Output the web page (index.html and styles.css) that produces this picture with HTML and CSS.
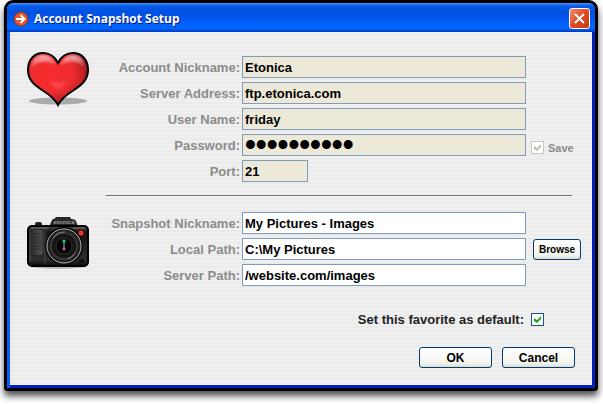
FILE: index.html
```html
<!DOCTYPE html>
<html lang="en">
<head>
<meta charset="UTF-8">
<meta name="viewport" content="width=device-width, initial-scale=1.0">
<title>Account Snapshot Setup</title>
<link rel="stylesheet" href="styles.css">
</head>
<body>

<div class="window">
    <header class="titlebar">
        <svg class="app-icon" width="16" height="16" viewBox="0 0 16 16" aria-hidden="true">
            <circle cx="8" cy="8" r="7" fill="#e4572c" stroke="#8c3524"/>
            <path d="M3 8h8M7.500 4l4 4-4 4" fill="none" stroke="#fff" stroke-width="2"/>
        </svg>
        <h1>Account Snapshot Setup</h1>
        <button type="button" class="close" aria-label="Close">
            <svg width="13" height="13" viewBox="0 0 13 13"><path d="M2 2l9 9M11 2l-9 9" stroke="#fff" stroke-width="2"/></svg>
        </button>
    </header>

    <form class="content">
        <section class="group">
            <svg class="picture" width="64" height="56" viewBox="0 0 64 56" aria-hidden="true">
                <defs>
                    <radialGradient id="heart" cx="0.4" cy="0.4" r="0.65">
                        <stop offset="0" stop-color="#f92a2d"/>
                        <stop offset="0.55" stop-color="#ee2c2f"/>
                        <stop offset="0.8" stop-color="#bf2125"/>
                        <stop offset="1" stop-color="#7c0e12"/>
                    </radialGradient>
                    <linearGradient id="shine" x1="0" y1="0" x2="0" y2="1">
                        <stop offset="0" stop-color="#fff" stop-opacity="0.65"/>
                        <stop offset="1" stop-color="#fff" stop-opacity="0"/>
                    </linearGradient>
                    <filter id="soft">
                        <feGaussianBlur stdDeviation="1"/>
                    </filter>
                </defs>
                <ellipse cx="31" cy="49" rx="29" ry="3.500" fill="#aaa"/>
                <path d="M31 53C28 47 23 43 15 38C6 32 1 27 1 18C1 8 7 1 16 1C23 1 28 5 31 11C34 5 39 1 46 1C55 1 61 8 61 18C61 27 56 32 47 38C39 43 34 47 31 53Z" fill="url(#heart)" stroke="#000" stroke-width="2"/>
                <g filter="url(#soft)">
                    <path d="M4 17C4 8 9 3 16 3C22 3 27 7 29 13C20 8 10 9 4 17Z" fill="url(#shine)"/>
                    <path d="M33 13C35 7 40 3 46 3C53 3 58 8 58 17C53 9 43 8 33 13Z" fill="url(#shine)"/>
                    <path d="M21 30h20l-10 8z" fill="#ff6666" opacity="0.4"/>
                </g>
            </svg>
            <div class="rows">
                <div class="row">
                    <label for="account">Account Nickname:</label>
                    <input type="text" id="account" class="field locked" value="Etonica" readonly>
                </div>
                <div class="row">
                    <label for="server">Server Address:</label>
                    <input type="text" id="server" class="field locked" value="ftp.etonica.com" readonly>
                </div>
                <div class="row">
                    <label for="user">User Name:</label>
                    <input type="text" id="user" class="field locked" value="friday" readonly>
                </div>
                <div class="row">
                    <label for="password">Password:</label>
                    <input type="password" id="password" class="field locked password" value="abcdefghij" readonly>
                    <div class="save">
                        <input type="checkbox" id="save" class="check" checked disabled>
                        <label for="save">Save</label>
                    </div>
                </div>
                <div class="row">
                    <label for="port">Port:</label>
                    <input type="text" id="port" class="field locked port" value="21" readonly>
                </div>
            </div>
        </section>

        <hr class="divider">

        <section class="group">
            <svg class="picture camera" width="64" height="56" viewBox="0 0 64 56" aria-hidden="true">
                <defs>
                    <linearGradient id="body" x1="0" y1="0" x2="0" y2="1">
                        <stop offset="0" stop-color="#4a4a4a"/>
                        <stop offset="0.15" stop-color="#161616"/>
                        <stop offset="0.85" stop-color="#2c2c2c"/>
                        <stop offset="1" stop-color="#0a0a0a"/>
                    </linearGradient>
                    <linearGradient id="grip">
                        <stop offset="0" stop-color="#2a2a2a"/>
                        <stop offset="0.8" stop-color="#505050"/>
                        <stop offset="1" stop-color="#2a2a2a"/>
                    </linearGradient>
                    <radialGradient id="lens">
                        <stop offset="0" stop-color="#111"/>
                        <stop offset="0.7" stop-color="#333"/>
                        <stop offset="1" stop-color="#161616"/>
                    </radialGradient>
                </defs>
                <ellipse cx="31" cy="50" rx="29" ry="3" fill="#bbb"/>
                <path d="M8 11V8q0-2 2-2h3q2 0 2 2v3z" fill="#222"/>
                <path d="M22 11l3-7q0-1 2-1l2-2h14l1 2q4 0 5 2l2 6z" fill="#262626"/>
                <rect x="1" y="10" width="60" height="40" rx="4" fill="url(#body)" stroke="#000" stroke-width="2"/>
                <path d="M4 12h17M46 12h12" stroke="#777"/>
                <path d="M3 14v32" stroke="#555"/>
                <rect x="4" y="14" width="13" height="25" rx="4" fill="url(#grip)"/>
                <path d="M6 18h9M6 21h9M6 24h9M6 27h9M6 30h9M6 33h9" stroke="#222" opacity="0.6"/>
                <path d="M18 13v35" stroke="#444"/>
                <text x="37" y="8" class="brand">etonica</text>
                <circle cx="37" cy="30" r="19" fill="#090909"/>
                <circle cx="37" cy="30" r="17" fill="url(#lens)" stroke="#bbb"/>
                <circle cx="37" cy="30" r="13" fill="#161616" stroke="#484848"/>
                <circle cx="37" cy="30" r="8" fill="#060606" stroke="#303030"/>
                <path d="M26 22a14 14 0 0 1 12-6M48 37a13 13 0 0 1-7 6" fill="none" stroke="#888"/>
                <path d="M37 24v8" stroke="#8bb"/>
                <circle cx="37" cy="25" r="1.500" fill="#25d890"/>
                <circle cx="37" cy="33" r="1.500" fill="#b565b8"/>
                <circle cx="54" cy="17" r="2.500" fill="#f3321f"/>
                <rect x="52" y="43" width="5" height="4" fill="#111"/>
            </svg>
            <div class="rows">
                <div class="row">
                    <label for="snapshot">Snapshot Nickname:</label>
                    <input type="text" id="snapshot" class="field" value="My Pictures - Images">
                </div>
                <div class="row">
                    <label for="local">Local Path:</label>
                    <input type="text" id="local" class="field" value="C:\My Pictures">
                    <button type="button" class="button browse">Browse</button>
                </div>
                <div class="row">
                    <label for="path">Server Path:</label>
                    <input type="text" id="path" class="field" value="/website.com/images">
                </div>
            </div>
        </section>

        <div class="default">
            <label for="default">Set this favorite as default:</label>
            <input type="checkbox" id="default" class="check" checked>
        </div>

        <div class="actions">
            <button type="submit" class="button">OK</button>
            <button type="button" class="button">Cancel</button>
        </div>
    </form>
</div>

</body>
</html>
```

FILE: styles.css
```css
* {
    box-sizing: border-box;
}

body {
    margin: 0;
    padding: 0 5px 13px 4px;
    background-color: #fff;
    font-family: "Liberation Sans", Arial, sans-serif;
    font-size: 13px;
    font-weight: bold;
}

.window {
    overflow: hidden;
    border: 3px solid #000;
    border-radius: 9px 9px 3px 3px;
    background: linear-gradient(90deg, #0a5cf5 50%, #0020b8 50%);
    box-shadow: 0 5px 7px rgba(0, 0, 0, 0.7);
}

/* title bar */
.titlebar {
    display: flex;
    align-items: center;
    height: 29px;
    padding: 2px 5px 0 6px;
    background: linear-gradient(#3c94ff 0, #0a5ce8 3px, #0050e0 9px, #0058f0 16px, #0068ff 24px, #0060f8 26px, #0038c0 29px);
}

.titlebar h1 {
    flex: 1;
    margin: 0 0 0 5px;
    color: #fff;
    font-family: "Open Sans", sans-serif;
    font-size: 12px;
    line-height: 20px;
    text-shadow: 1px 1px 0 #0a1883;
}

.close {
    display: flex;
    align-items: center;
    justify-content: center;
    width: 21px;
    height: 21px;
    padding: 0;
    border: 1px solid #fff;
    border-radius: 3px;
    background: linear-gradient(135deg, #f09078, #dd4a28 50%, #c83808);
}

/* form */
.content {
    margin: 0 3px;
    padding: 24px 11px 17px 17px;
    border-bottom: 3px solid #0024b8;
    background: repeating-linear-gradient(#f0f0f0 0, #f0f0f0 2px, #ebebeb 2px, #ebebeb 4px);
}

.group {
    display: flex;
    align-items: flex-start;
}

.picture {
    flex: none;
    margin: -4px 15px 0 0;
}

.camera {
    margin-top: 4px;
}

.brand {
    fill: #999;
    font-size: 6px;
    text-anchor: middle;
}

.rows {
    display: grid;
    flex: 1;
    gap: 4px;
}

.row {
    display: grid;
    grid-template-columns: 136px 1fr 55px;
    align-items: center;
    height: 22px;
}

.row label {
    padding-right: 2px;
    color: #8b8b8b;
    text-align: right;
}

.field {
    width: 100%;
    height: 22px;
    padding: 1px 2px 0;
    border: 1px solid #7f9db9;
    border-radius: 0;
    background-color: #fff;
    color: #000;
    font: inherit;
    outline: none;
}

.locked {
    background-color: #ece9d8;
}

.port {
    width: 66px;
}

.password {
    padding: 0 2px;
    font-size: 31px;
    line-height: 20px;
}

.divider {
    height: 1px;
    margin: 13px 9px 16px 79px;
    border: 0;
    background-color: #77737a;
}

.check {
    display: grid;
    place-content: center;
    width: 13px;
    height: 13px;
    margin: 0;
    border: 1px solid #1c5180;
    background-color: #fff;
    appearance: none;
}

.check:checked::before {
    content: "";
    width: 7px;
    height: 7px;
    background-color: #21a121;
    clip-path: polygon(0 28%, 43% 62%, 100% 0, 100% 42%, 43% 100%, 0 70%);
}

.check:disabled {
    border-color: #cac8bb;
}

.check:disabled::before {
    background-color: #bdbbaa;
}

.save {
    display: flex;
    align-items: center;
    gap: 4px;
    padding: 5px 0 0 5px;
    font-size: 11px;
}

.button {
    width: 73px;
    height: 21px;
    padding: 0;
    border: 1px solid #003c74;
    border-radius: 3px;
    background: linear-gradient(#fff, #f3f3ee 80%, #dedbd0);
    color: #000;
    font: inherit;
    font-size: 12px;
}

.browse {
    width: 48px;
    margin-left: 7px;
    font-size: 10px;
}

.default {
    display: flex;
    align-items: center;
    justify-content: flex-end;
    gap: 7px;
    margin: 26px 37px 0 0;
    color: #222;
}

.actions {
    display: flex;
    justify-content: flex-end;
    gap: 10px;
    margin: 20px 6px 0 0;
}
```
